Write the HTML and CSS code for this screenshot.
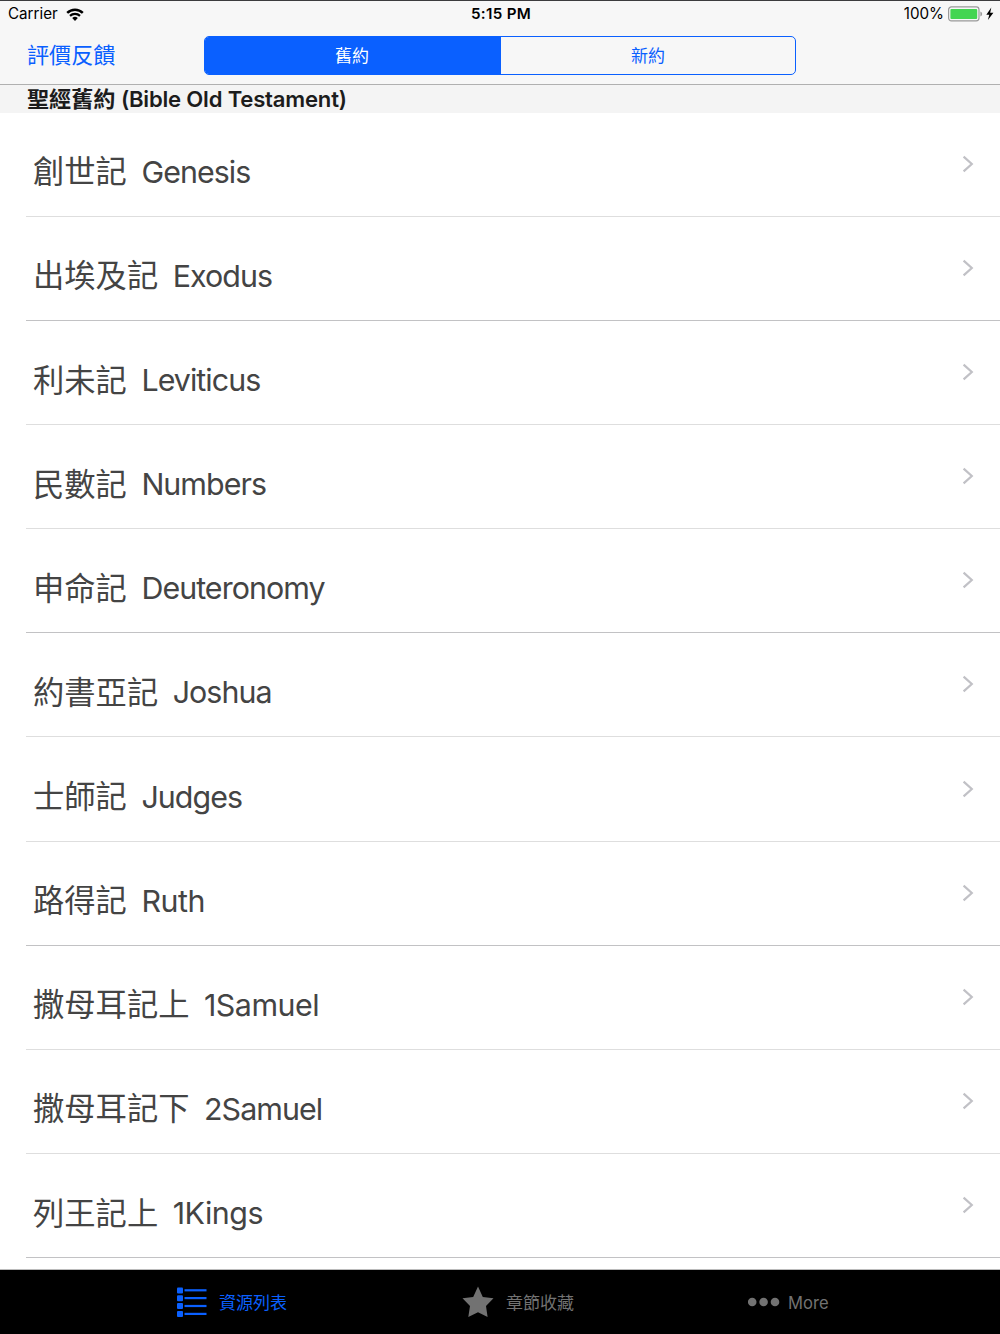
FILE: index.html
```html
<!DOCTYPE html>
<html lang="zh-Hant">
<head>
    <meta charset="UTF-8">
    <meta name="viewport" content="width=device-width, initial-scale=1.0">
    <title>聖經</title>
    <link rel="stylesheet" href="styles.css">
</head>
<body>
    <div class="app">
        <!-- Status bar -->
        <div class="status-bar">
            <div class="status-left">
                <span class="carrier">Carrier</span>
                <svg class="wifi" width="18" height="13" viewBox="0 0 18 13">
                    <path d="M1.2 4.8 A11.2 11.2 0 0 1 16.8 4.8" fill="none" stroke="#000" stroke-width="2.5"/>
                    <path d="M4 7.9 A7.2 7.2 0 0 1 14 7.9" fill="none" stroke="#000" stroke-width="2.2"/>
                    <path d="M9 12.9 L6.2 10.1 A4 4 0 0 1 11.8 10.1 Z"/>
                </svg>
            </div>
            <div class="status-time">5:15 PM</div>
            <div class="status-right">
                <span class="percent">100%</span>
                <svg width="46" height="16" viewBox="0 0 46 16">
                    <rect x=".6" y=".9" width="30.4" height="14" rx="2.8" fill="none" stroke="#9a9a9a" stroke-width="1.2"/>
                    <rect x="2.4" y="2.9" width="26.8" height="10" rx="1" fill="#43d551"/>
                    <path d="M32.4 5.6 Q34.2 6.2 34.2 8 Q34.2 9.8 32.4 10.4 Z" fill="#9a9a9a"/>
                    <path d="M43.3 1.6 L38.3 8.8 H41.3 L39.9 14 L45.4 6.7 H42.2 Z"/>
                </svg>
            </div>
        </div>

        <!-- Navigation bar -->
        <div class="nav-bar">
            <a class="nav-link">評價反饋</a>
            <div class="segment">
                <div class="segment-item active">舊約</div>
                <div class="segment-item">新約</div>
            </div>
        </div>

        <div class="section-title">聖經舊約 <span>(Bible Old Testament)</span></div>

        <!-- Book list -->
        <ul class="book-list">
            <li class="book"><span class="zh">創世記</span><span class="en">Genesis</span><svg class="chevron" viewBox="0 0 12 18"><path d="M1.6 1.6 L9.8 9 L1.6 16.4"/></svg></li>
            <li class="book"><span class="zh">出埃及記</span><span class="en">Exodus</span><svg class="chevron" viewBox="0 0 12 18"><path d="M1.6 1.6 L9.8 9 L1.6 16.4"/></svg></li>
            <li class="book"><span class="zh">利未記</span><span class="en">Leviticus</span><svg class="chevron" viewBox="0 0 12 18"><path d="M1.6 1.6 L9.8 9 L1.6 16.4"/></svg></li>
            <li class="book"><span class="zh">民數記</span><span class="en">Numbers</span><svg class="chevron" viewBox="0 0 12 18"><path d="M1.6 1.6 L9.8 9 L1.6 16.4"/></svg></li>
            <li class="book"><span class="zh">申命記</span><span class="en">Deuteronomy</span><svg class="chevron" viewBox="0 0 12 18"><path d="M1.6 1.6 L9.8 9 L1.6 16.4"/></svg></li>
            <li class="book"><span class="zh">約書亞記</span><span class="en">Joshua</span><svg class="chevron" viewBox="0 0 12 18"><path d="M1.6 1.6 L9.8 9 L1.6 16.4"/></svg></li>
            <li class="book"><span class="zh">士師記</span><span class="en">Judges</span><svg class="chevron" viewBox="0 0 12 18"><path d="M1.6 1.6 L9.8 9 L1.6 16.4"/></svg></li>
            <li class="book"><span class="zh">路得記</span><span class="en loose">Ruth</span><svg class="chevron" viewBox="0 0 12 18"><path d="M1.6 1.6 L9.8 9 L1.6 16.4"/></svg></li>
            <li class="book"><span class="zh">撒母耳記上</span><span class="en loose">1Samuel</span><svg class="chevron" viewBox="0 0 12 18"><path d="M1.6 1.6 L9.8 9 L1.6 16.4"/></svg></li>
            <li class="book"><span class="zh">撒母耳記下</span><span class="en">2Samuel</span><svg class="chevron" viewBox="0 0 12 18"><path d="M1.6 1.6 L9.8 9 L1.6 16.4"/></svg></li>
            <li class="book"><span class="zh">列王記上</span><span class="en loose">1Kings</span><svg class="chevron" viewBox="0 0 12 18"><path d="M1.6 1.6 L9.8 9 L1.6 16.4"/></svg></li>
        </ul>

        <!-- Tab bar -->
        <div class="tab-bar">
            <div class="tab tab-list active">
                <svg width="30" height="31" viewBox="0 0 30 31">
                    <g fill="currentColor">
                        <rect x="0" y="0.4" width="6" height="6" rx="1"/>
                        <rect x="0" y="8.2" width="6" height="6" rx="1"/>
                        <rect x="0" y="16" width="6" height="6" rx="1"/>
                        <rect x="0" y="23.9" width="6" height="6" rx="1"/>
                        <rect x="7.5" y="2.2" width="22" height="2.2"/>
                        <rect x="7.5" y="10" width="22" height="2.2"/>
                        <rect x="7.5" y="17.9" width="22" height="2.2"/>
                        <rect x="7.5" y="25.8" width="22" height="2.2"/>
                    </g>
                </svg>
                <span>資源列表</span>
            </div>
            <div class="tab tab-star">
                <svg width="32" height="32" viewBox="0 0 32 32">
                    <path fill="currentColor" d="M16 0.5 L20.8 11 L31.5 12.2 L24 20 L25.6 31 L16 26.2 L6.3 31 L8 20 L0.5 12.2 L11.2 11 Z"/>
                </svg>
                <span>章節收藏</span>
            </div>
            <div class="tab tab-more">
                <svg width="32" height="10" viewBox="0 0 32 10">
                    <g fill="currentColor">
                        <circle cx="4.2" cy="5" r="4.3"/>
                        <circle cx="15.6" cy="5" r="4.3"/>
                        <circle cx="27" cy="5" r="4.3"/>
                    </g>
                </svg>
                <span>More</span>
            </div>
        </div>
    </div>
</body>
</html>
```
FILE: styles.css
```css
* {
    box-sizing: border-box;
}

body {
    margin: 0;
    background-color: #fff;
    font-family: Inter, "Noto Sans CJK TC", sans-serif;
    color: #000;
}

.app {
    width: 1000px;
    height: 1334px;
    display: flex;
    flex-direction: column;
    overflow: hidden;
}

/* Status bar */
.status-bar {
    height: 28px;
    flex: none;
    display: grid;
    grid-template-columns: 1fr auto 1fr;
    align-items: center;
    padding: 0 6px 1px 8px;
    border-top: 1px solid #3c3c3e;
    background-color: #f7f7f7;
    font-size: 15.2px;
    line-height: 26px;
}

.status-left,
.status-right {
    display: flex;
    align-items: center;
}

.status-left {
    gap: 8px;
}

.status-right {
    justify-content: flex-end;
    gap: 4px;
}

.status-time {
    font-weight: 600;
    letter-spacing: 0.3px;
}

/* Navigation bar */
.nav-bar {
    height: 57px;
    flex: none;
    display: flex;
    align-items: flex-start;
    padding: 8px 0 0 27px;
    border-bottom: 1px solid #b0b0b0;
    background-color: #f7f7f7;
    color: #0a60ff;
}

.nav-link {
    width: 177px;
    font-size: 22.1px;
    line-height: 39px;
}

.segment {
    width: 592px;
    height: 39px;
    display: flex;
    border: 1.3px solid #0a60ff;
    border-radius: 5px;
    overflow: hidden;
}

.segment-item {
    flex: 1;
    text-align: center;
    font-size: 17px;
    line-height: 38px;
}

.segment-item.active {
    padding-right: 2px;
    background-color: #0a60ff;
    color: #fff;
}

.section-title {
    height: 27.7px;
    flex: none;
    padding-left: 27px;
    background-color: #f4f4f4;
    color: #1c1c1c;
    font-size: 22.1px;
    font-weight: 600;
    line-height: 28px;
    white-space: nowrap;
}

.section-title span {
    letter-spacing: -0.2px;
}

/* Book list */
.book-list {
    flex: 1;
    margin: 0;
    padding: 0 0 0 26px;
    list-style: none;
}

.book {
    height: 104.13px;
    display: flex;
    align-items: center;
    padding: 15px 26px 0 7px;
    border-bottom: 1px solid #dedede;
    color: #444;
    font-size: 31.3px;
    line-height: 40px;
}

.book:nth-child(3n + 2) {
    border-bottom-color: #c2c2c4;
}

.zh {
    padding-top: 1px;
}

.en {
    margin-left: 14.5px;
    font-size: 30.4px;
    letter-spacing: -0.95px;
}

.en.loose {
    letter-spacing: -0.5px;
}

.chevron {
    width: 12px;
    height: 18px;
    margin: 0 0 16px auto;
    fill: none;
    stroke: #c1c1c6;
    stroke-width: 2.2;
}

/* Tab bar */
.tab-bar {
    height: 65px;
    flex: none;
    display: flex;
    align-items: center;
    padding-left: 177px;
    border-top: 1px solid #bbb;
    background-color: #000;
    color: #727272;
    font-size: 17px;
    line-height: 24px;
}

.tab {
    display: flex;
    align-items: center;
    gap: 12px;
}

.tab span {
    padding-top: 1px;
}

.tab.active {
    color: #0a60ff;
}

.tab-list {
    width: 285px;
}

.tab-star {
    width: 286px;
}

.tab-more {
    gap: 8px;
    font-size: 16.6px;
}
```
